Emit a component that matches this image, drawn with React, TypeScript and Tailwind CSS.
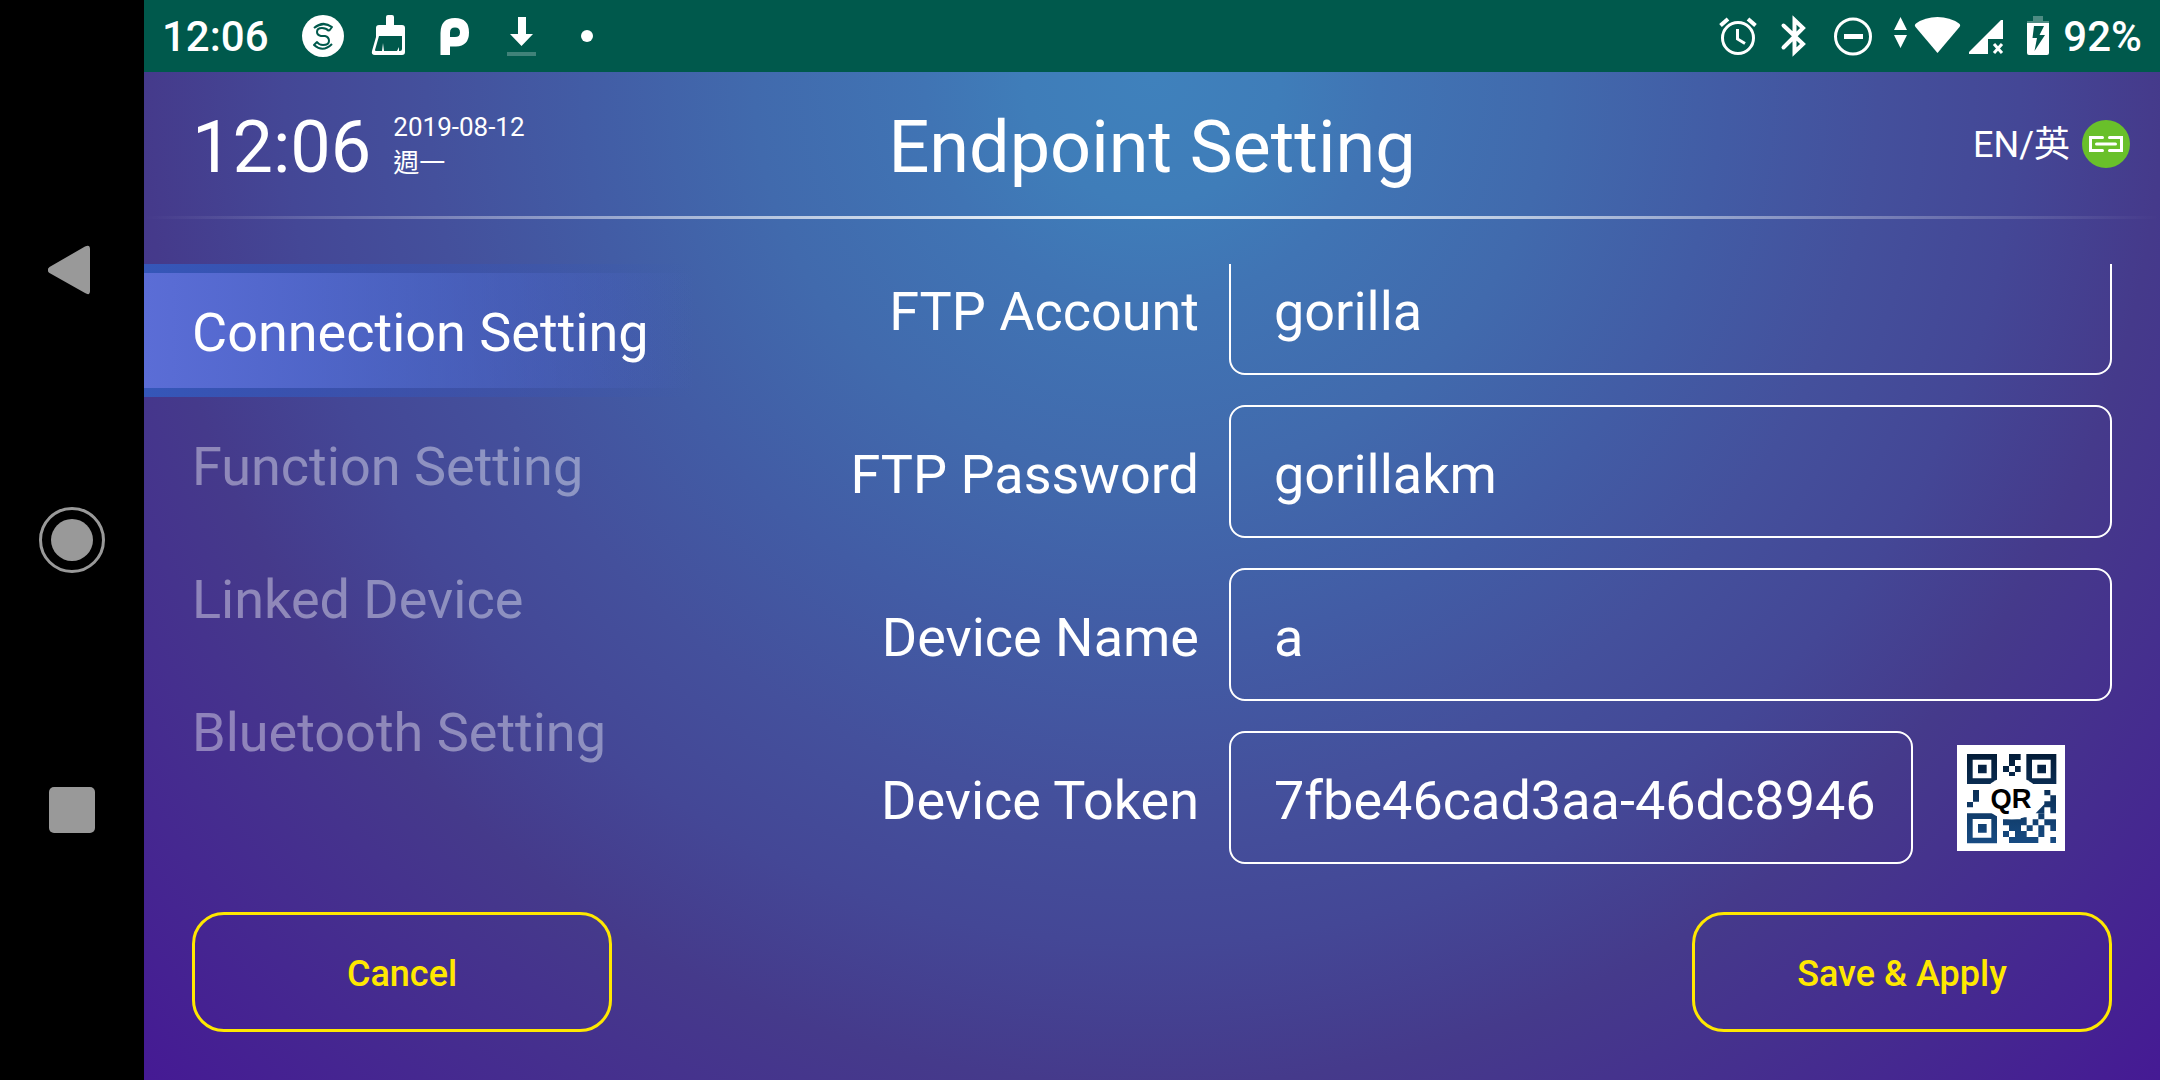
import type { ReactNode } from "react";

const menu = ["Connection Setting", "Function Setting", "Linked Device", "Bluetooth Setting"];

function StatusIcon({ width, children }: { width: number; children: ReactNode }) {
  return (
    <svg width={width} height={72} viewBox={`0 0 ${width} 72`} fill="white" className="shrink-0" aria-hidden="true">
      {children}
    </svg>
  );
}

function NavBar() {
  return (
    <nav aria-label="System navigation" className="flex w-36 shrink-0 flex-col bg-black py-[12.5vh]">
      <button aria-label="Back" className="flex flex-1 items-center justify-center">
        <svg width="48" height="54" viewBox="0 0 48 54" fill="#999">
          <path d="M1.500 24 37 3.500Q42 1 42 6V48Q42 53 37 50L1.500 30Q-2 27 1.500 24Z" />
        </svg>
      </button>
      <button aria-label="Home" className="flex flex-1 items-center justify-center">
        <svg width="66" height="66" viewBox="0 0 66 66" fill="#999">
          <circle cx="33" cy="33" r="31.500" fill="none" stroke="#999" strokeWidth="3" />
          <circle cx="33" cy="33" r="21" />
        </svg>
      </button>
      <button aria-label="Recent apps" className="flex flex-1 items-center justify-center">
        <span className="size-[46px] rounded-[5px] bg-[#999]" />
      </button>
    </nav>
  );
}

function StatusBar() {
  return (
    <div className="flex h-[72px] shrink-0 items-center justify-between bg-[#00594c] pr-[18px] pl-[18px] text-[42px] leading-[48px] font-medium">
      <div className="flex items-center">
        <span className="w-32 pt-0.5">12:06</span>
        <StatusIcon width={66}>
          <circle cx="33" cy="36" r="21" />
          <path
            d="M24 28Q33 20 42 27L39 31M42 27Q33 21 24 28M39 31Q36 28 32 28Q27 28 27 32Q27 35 31 36H35Q39 37 39 41Q39 45 33 45Q29 45 27 42L24 45Q33 53 42 44"
            fill="none"
            stroke="#00594c"
            strokeWidth="2"
            strokeLinejoin="round"
          />
        </StatusIcon>
        <StatusIcon width={66}>
          <path
            fillRule="evenodd"
            d="M30 17Q30 15 32 15H36Q38 15 38 17V25H46Q49 25 49 28V52Q49 55 46 55H19Q15 55 16 51L20 37V28Q20 25 23 25H30ZM23 36 19 50Q19 51 20 51H26L27 43 28 51H41L43 47V51H44Q46 51 46 49V36Z"
          />
        </StatusIcon>
        <StatusIcon width={66}>
          <path
            fillRule="evenodd"
            d="M18.500 55V33Q18.500 18 33 18Q47 18 47 32.500Q47 46 34 46.500H28V55ZM28 37V32.500Q28 27.500 33 27.500Q38 27.500 38 32.500Q38 37 33 37Z"
          />
        </StatusIcon>
        <StatusIcon width={66}>
          <path d="M30 17H38V34H45L33.500 46 22 34H30Z" />
          <rect x="19" y="52" width="29" height="4" opacity=".25" />
        </StatusIcon>
        <StatusIcon width={66}>
          <circle cx="33" cy="36" r="6" />
        </StatusIcon>
      </div>
      <div className="flex items-center">
        <StatusIcon width={56}>
          <g fill="none" stroke="white" strokeWidth="3">
            <circle cx="28" cy="38" r="15.500" />
            <path d="M27.500 29V39L35 43.500" />
            <path d="M10.500 25.500 18 19M45.500 25.500 38 19" strokeWidth="4" />
          </g>
        </StatusIcon>
        <StatusIcon width={56}>
          <path
            d="M17.500 25.500 37 44 28.500 52V20L37 28 17.500 47.500"
            fill="none"
            stroke="white"
            strokeWidth="4"
            strokeLinecap="round"
            strokeLinejoin="miter"
          />
        </StatusIcon>
        <StatusIcon width={62}>
          <circle cx="31" cy="36.500" r="17.500" fill="none" stroke="white" strokeWidth="3" />
          <rect x="22" y="34" width="19" height="5" />
        </StatusIcon>
        <StatusIcon width={80}>
          <path d="M10 30 16.500 17 23 30ZM10 35H23L16.500 48Z" />
          <path d="M53.500 53 31.500 27Q30 25 32 23.500Q41 17 53.500 17Q66 17 75 23.500Q77 25 75.500 27Z" />
        </StatusIcon>
        <StatusIcon width={48}>
          <path d="M39 20V39H24V54H5V52L37 20Z" />
          <path d="M30 44 38 53M38 44 30 53" stroke="white" strokeWidth="3" />
        </StatusIcon>
        <StatusIcon width={51}>
          <path d="M21 16H31V21H37V24H15V21H21Z" opacity=".3" />
          <path
            fillRule="evenodd"
            d="M15 23H37V53Q37 55 35 55H17Q15 55 15 53ZM22 26 20.500 38H25L22.500 51 33 35H27.500L32 26Z"
          />
        </StatusIcon>
        <span className="pt-0.5">92%</span>
      </div>
    </div>
  );
}

function LinkBadge() {
  return (
    <svg width="48" height="48" viewBox="0 0 48 48" fill="none" role="img" aria-label="Connected">
      <circle cx="24" cy="24" r="24" fill="#69c02a" />
      <g stroke="white" strokeWidth="3" strokeLinecap="round">
        <path d="M20.500 17.500H8.500V30.500H20.500M27.500 17.500H39.500V30.500H27.500M14.500 24H33.500" />
      </g>
    </svg>
  );
}

function QrCode() {
  const finder = (x: number, y: number) => (
    <path
      fillRule="evenodd"
      d={`M${x} ${y}h90v90h-90ZM${x + 17} ${y + 17}v56h56v-56ZM${x + 33} ${y + 32}h26v26h-26Z`}
    />
  );
  return (
    <svg viewBox="51 39 324 318" className="h-[106px] w-[108px]" aria-hidden="true">
      <defs>
        <linearGradient id="qr-ink" gradientUnits="userSpaceOnUse" x1="0" y1="66" x2="0" y2="333">
          <stop offset="0" stopColor="#031c38" />
          <stop offset="1" stopColor="#174b82" />
        </linearGradient>
      </defs>
      <rect x="51" y="39" width="324" height="318" fill="white" />
      <g fill="url(#qr-ink)">
        {finder(81, 66)}
        {finder(259, 66)}
        {finder(81, 244)}
        <path d="M207 66h35v18h-17v18h-18ZM189 102h18v18h-18ZM225 102h17v18h-17ZM207 120h18v12h-18Z" />
        <path d="M99 174h18v35h-18ZM81 210h18v16h-18Z" />
        <path d="M313 174h18v16h-18ZM331 190h17v54h-17v-18h-18v18h-26l26-27v-9h18Z" />
        <path d="M189 262h53v-6h18v24h-17v17h-18v-9h-18v-8h-18ZM207 280h18v17h-18ZM225 288h18v9h17v-17h18v17h-18v18h-35ZM295 244h18v18h-18ZM278 262h17v18h-17ZM295 280h18v17h-18ZM313 262h35v35h-17v-17h-18Z" />
        <path d="M189 297h18v18h-18ZM207 315h88v18h-88ZM295 297h18v18h-18ZM331 315h17v18h-17Z" />
      </g>
      <ellipse cx="215" cy="198" rx="86" ry="64" fill="white" />
      <text x="213" y="227" textAnchor="middle" className="font-['Liberation_Sans',sans-serif] text-[82px] font-bold">
        QR
      </text>
    </svg>
  );
}

function Field({ id, label, value, children }: { id: string; label: string; value: string; children?: ReactNode }) {
  return (
    <div className="grid grid-cols-[minmax(0,503fr)_minmax(0,883fr)] items-center gap-[30px]">
      <label htmlFor={id} className="pt-1.5 text-right">
        {label}
      </label>
      <div className="flex items-center">
        <input
          id={id}
          defaultValue={value}
          className="h-[133px] min-w-0 flex-1 rounded-[16px] border-2 border-white bg-transparent pt-1.5 pl-[43px] outline-none"
        />
        {children}
      </div>
    </div>
  );
}

export default function App() {
  return (
    <div className="flex min-h-screen bg-black font-[Roboto,'Noto_Sans_CJK_TC',sans-serif] text-white">
      <NavBar />
      <div className="flex min-w-0 flex-1 flex-col bg-[radial-gradient(circle_farthest-corner_at_50%_7%,#3f81bc_0%,#3f7db9_9%,#4074b4_16%,#416aad_28%,#425ca5_40%,#44509c_51%,#444796_61%,#453a8b_71%,#451a94_100%)]">
        <StatusBar />
        <div className="flex flex-1 flex-col">
          <header>
            <div className="grid h-36 grid-cols-[1fr_auto_1fr] items-center px-[30px]">
              <div className="flex items-center gap-[22px] pl-[18px]">
                <span className="pt-2 text-[72px] leading-[84px]">12:06</span>
                <div className="pt-0.5 text-[26px] leading-9">
                  <div>2019-08-12</div>
                  <div>週一</div>
                </div>
              </div>
              <h1 className="pt-2 text-[72px] leading-[84px]">Endpoint Setting</h1>
              <div className="flex items-center justify-end gap-3">
                <button className="pt-0.5 text-[36px] leading-10">EN/英</button>
                <LinkBadge />
              </div>
            </div>
            <div className="h-[3px] bg-[linear-gradient(to_right,transparent,white_50%,transparent)]" />
          </header>

          <main className="flex flex-1 pt-[45px] text-[54px] leading-[64px]">
            <nav aria-label="Settings" className="w-[552px] shrink-0">
              {menu.map((item, i) =>
                i === 0 ? (
                  <button
                    key={item}
                    aria-current="page"
                    className="block w-full bg-[linear-gradient(to_right,#3557b9,#3557b900)] py-[9px] text-left"
                  >
                    <span className="block h-[115px] bg-[linear-gradient(to_right,#5b6dd6,#5068c8aa_50%,#4a68c000)] pt-7 pl-12">
                      {item}
                    </span>
                  </button>
                ) : (
                  <button key={item} className="block h-[133px] w-full pt-1.5 pl-12 text-left text-white/40">
                    {item}
                  </button>
                ),
              )}
            </nav>
            <form className="min-w-0 flex-1 overflow-hidden pr-12">
              <div className="-mt-[22px] flex flex-col gap-[30px]">
                <Field id="ftp-account" label="FTP Account" value="gorilla" />
                <Field id="ftp-password" label="FTP Password" value="gorillakm" />
                <Field id="device-name" label="Device Name" value="a" />
                <Field id="device-token" label="Device Token" value="7fbe46cad3aa-46dc8946">
                  <button type="button" aria-label="Show QR code" className="mr-[47px] ml-11 shrink-0">
                    <QrCode />
                  </button>
                </Field>
              </div>
            </form>
          </main>

          <footer className="flex justify-between px-12 pt-12 pb-12 text-[36px] leading-[44px] font-medium text-[#ffe800]">
            <button className="h-[120px] w-[420px] rounded-[32px] border-3 border-[#ffe800] pt-1">Cancel</button>
            <button className="h-[120px] w-[420px] rounded-[32px] border-3 border-[#ffe800] pt-1">
              Save &amp; Apply
            </button>
          </footer>
        </div>
      </div>
    </div>
  );
}
